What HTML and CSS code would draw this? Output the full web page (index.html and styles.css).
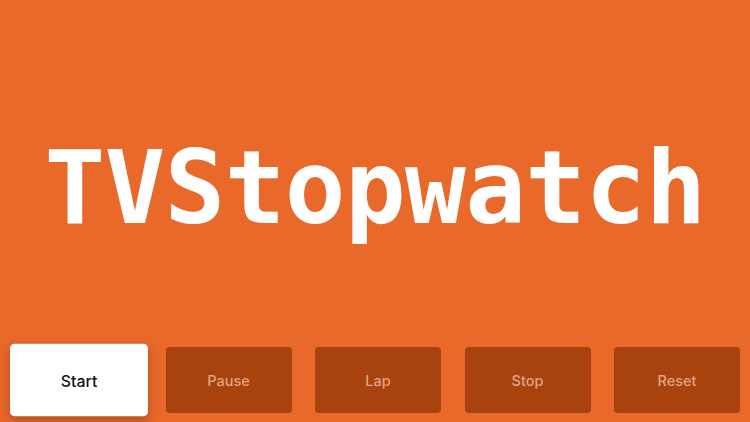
FILE: index.html
```html
<!DOCTYPE html>
<html lang="en">
  <head>
    <meta charset="UTF-8" />
    <meta name="viewport" content="width=device-width, initial-scale=1.0" />
    <title>TVStopwatch</title>
    <link rel="stylesheet" href="styles.css">
  </head>
  <body>
    <main class="screen">
      <h1 class="display">TVStopwatch</h1>

      <nav class="controls">
        <button class="control focused">Start</button>
        <button class="control">Pause</button>
        <button class="control">Lap</button>
        <button class="control">Stop</button>
        <button class="control">Reset</button>
      </nav>
    </main>
  </body>
</html>
```

FILE: styles.css
```css
* {
  box-sizing: border-box;
}
html,
body {
  margin: 0;
  height: 100%;
}
body {
  background-color: #e9692b;
  font-family: Inter, "Noto Sans", sans-serif;
  overflow: hidden;
}
.screen {
  height: 100%;
  display: flex;
  flex-direction: column;
}
.display {
  flex: 1;
  margin: 0;
  display: flex;
  align-items: center;
  justify-content: center;
  padding-top: 28px;
  font-family: "DejaVu Sans Mono", monospace;
  font-weight: bold;
  font-size: 101px;
  letter-spacing: -0.7px;
  color: #ffffff;
}
.controls {
  display: flex;
  gap: 23.5px;
  padding: 0 10px 9px 16px;
}
.control {
  width: 126px;
  height: 66px;
  border: none;
  border-radius: 4px;
  background-color: #a8430f;
  color: #e2a283;
  font-family: inherit;
  font-size: 14.5px;
  font-weight: 500;
}
.control.focused {
  background-color: #ffffff;
  color: #111111;
  transform: scale(1.095);
  box-shadow: 0 4px 10px rgba(90, 30, 0, 0.35);
}
```
